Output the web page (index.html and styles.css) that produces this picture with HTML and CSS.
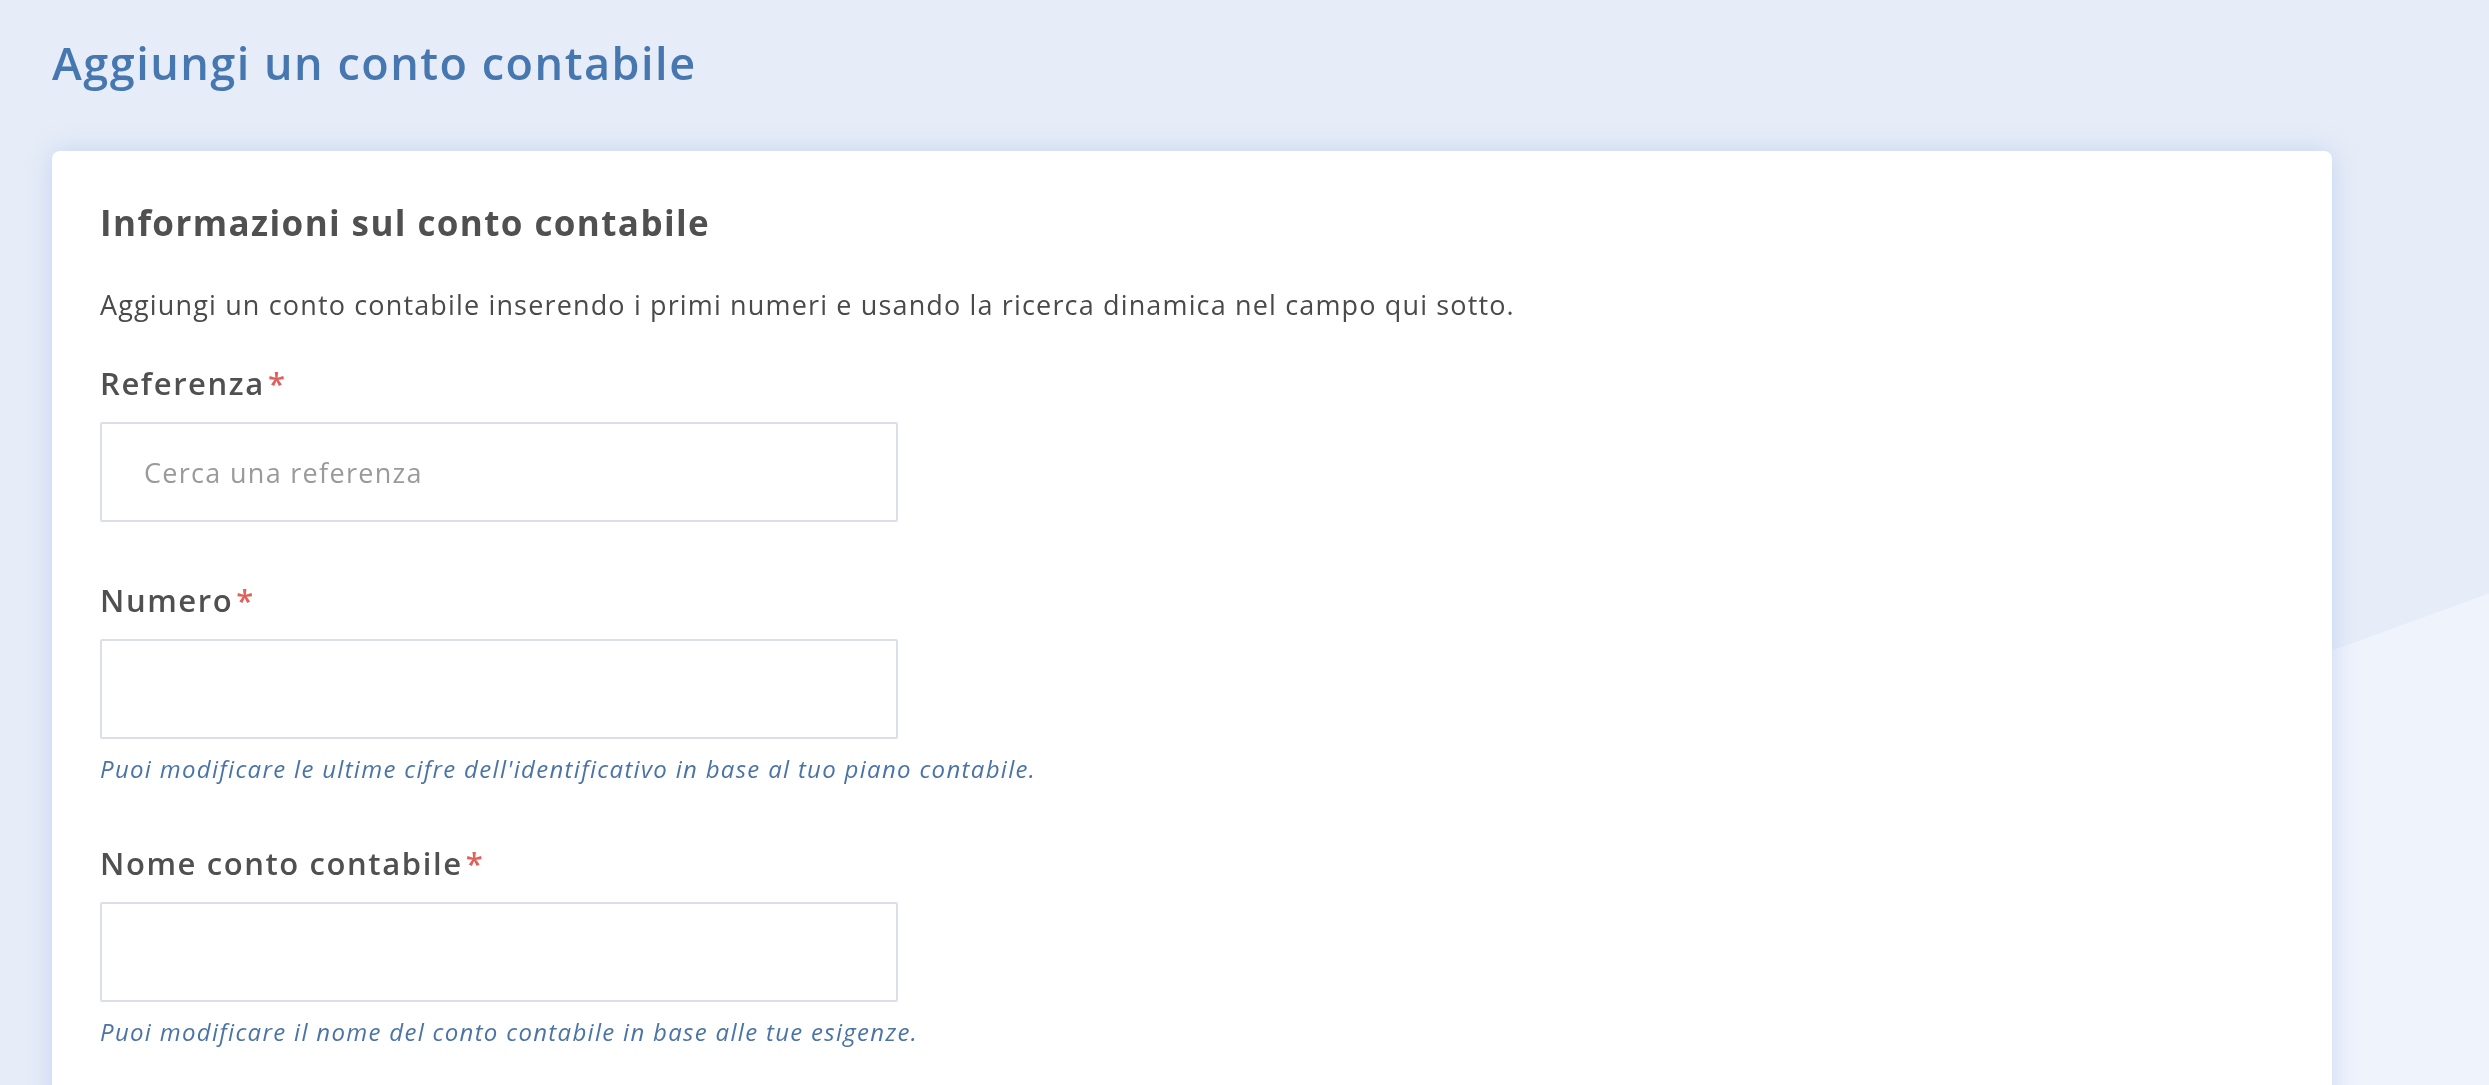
FILE: index.html
```html
<!DOCTYPE html>
<html lang="it">
  <head>
    <meta charset="UTF-8" />
    <title>Aggiungi un conto contabile</title>
    <link rel="stylesheet" href="styles.css">
  </head>
  <body>
    <div class="bg-shape"></div>
    <main class="page">
      <h1 class="page-title">Aggiungi un conto contabile</h1>

      <section class="card">
        <h2 class="card-title">Informazioni sul conto contabile</h2>
        <p class="card-intro">Aggiungi un conto contabile inserendo i primi numeri e usando la ricerca dinamica nel campo qui sotto.</p>

        <div class="field">
          <label class="field-label" for="referenza">Referenza<span class="required">*</span></label>
          <input class="field-input" id="referenza" type="text" placeholder="Cerca una referenza">
        </div>

        <div class="field">
          <label class="field-label" for="numero">Numero<span class="required">*</span></label>
          <input class="field-input" id="numero" type="text">
          <p class="field-help">Puoi modificare le ultime cifre dell'identificativo in base al tuo piano contabile.</p>
        </div>

        <div class="field">
          <label class="field-label" for="nome">Nome conto contabile<span class="required">*</span></label>
          <input class="field-input" id="nome" type="text">
          <p class="field-help">Puoi modificare il nome del conto contabile in base alle tue esigenze.</p>
        </div>
      </section>
    </main>
  </body>
</html>
```

FILE: styles.css
```css
/* Fond de page */
body {
  margin: 0;
  background-color: #e6edf8;
  font-family: "Open Sans", "Noto Sans", sans-serif;
  color: #4f4f4f;
  overflow: hidden;
}

/* Forme claire en bas a droite */
.bg-shape {
  position: fixed;
  top: 0;
  left: 0;
  width: 100%;
  height: 100%;
  background-color: #eff3fc;
  clip-path: polygon(0 138%, 100% 54.7%, 100% 100%, 0 100%);
  z-index: 0;
}

.page {
  position: relative;
  z-index: 1;
  padding: 35px 157px 0 52px;
}

.page-title {
  margin: 0 0 61px;
  font-size: 45px;
  line-height: 55px;
  font-weight: 600;
  letter-spacing: 1.5px;
  color: #4677b0;
}

/* Carte du formulaire */
.card {
  background-color: #ffffff;
  border-radius: 8px;
  box-shadow: 0 0 26px rgba(160, 182, 232, 0.45);
  padding: 50px 48px 60px;
}

.card-title {
  margin: 0 0 40px;
  font-size: 35px;
  line-height: 44px;
  font-weight: 700;
  letter-spacing: 1.4px;
  color: #505050;
}

.card-intro {
  margin: 0 0 38px;
  font-size: 27px;
  line-height: 40px;
  letter-spacing: 1.15px;
  color: #4a4a4a;
}

.field {
  margin-bottom: 58px;
}

.field-label {
  display: block;
  margin-bottom: 19px;
  font-size: 31px;
  line-height: 40px;
  font-weight: 600;
  letter-spacing: 1.6px;
  color: #505050;
}

.required {
  color: #e0605c;
  margin-left: 3px;
}

.field-input {
  display: block;
  box-sizing: border-box;
  width: 798px;
  height: 100px;
  padding: 0 42px;
  border: 2px solid #dcdfe7;
  border-radius: 2px;
  background: #ffffff;
  font-family: inherit;
  font-size: 27px;
  letter-spacing: 1.3px;
  color: #4f4f4f;
}

.field-input::placeholder {
  color: #9a9a9a;
}

.field-help {
  margin: 14px 0 0;
  font-size: 24px;
  line-height: 32px;
  font-style: italic;
  letter-spacing: 1.3px;
  color: #4b74a6;
}
```
